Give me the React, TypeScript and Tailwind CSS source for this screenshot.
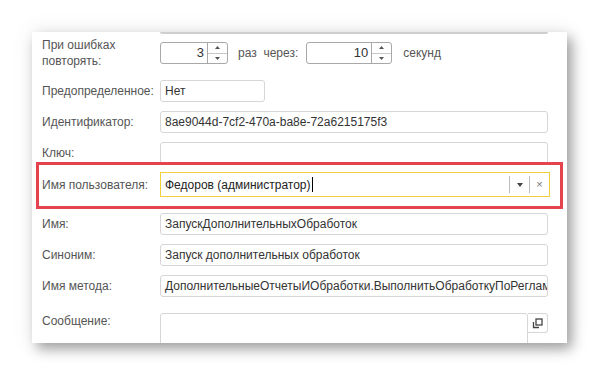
import type { ReactNode } from "react";

const LABEL_W = "w-[118px] shrink-0";

function Label({ children }: { children: ReactNode }) {
  return <div className={`${LABEL_W} text-[#555] leading-4`}>{children}</div>;
}

function Field({ value, w = "w-[388px]" }: { value?: string; w?: string }) {
  return (
    <div
      className={`${w} h-[22px] border border-[#d6d6d6] rounded-[3px] bg-white px-[4px] flex items-center overflow-hidden whitespace-nowrap text-[#333]`}
    >
      {value}
    </div>
  );
}

function Spinner({ value, w }: { value: string; w: string }) {
  return (
    <div className={`${w} h-[22px] border border-[#a8a8a8] rounded-[3px] bg-white flex`}>
      <div className="flex-1 flex items-center justify-end pr-[3px] text-[#333] text-[13px]">{value}</div>
      <div className="w-[20px] border-l border-[#a8a8a8] flex flex-col">
        <div className="flex-1 flex items-center justify-center border-b border-[#c8c8c8]">
          <svg width="5" height="3" viewBox="0 0 5 3">
            <path d="M0 3 L2.5 0 L5 3 Z" fill="#555" />
          </svg>
        </div>
        <div className="flex-1 flex items-center justify-center">
          <svg width="5" height="3" viewBox="0 0 5 3">
            <path d="M0 0 L2.5 3 L5 0 Z" fill="#555" />
          </svg>
        </div>
      </div>
    </div>
  );
}

export default function App() {
  return (
    <div
      className="w-[600px] h-[375px] bg-white pt-[32px] pl-[32px] text-[12px]"
      style={{ fontFamily: '"Liberation Sans", Arial, sans-serif' }}
    >
      <div className="relative w-[535px] h-[311px] bg-white overflow-hidden shadow-[5px_6px_12px_rgba(0,0,0,0.35),0_0_22px_rgba(0,0,0,0.08)] pl-[10px]">
        {/* bottom edge of a field scrolled out of view */}
        <div className="ml-[118px] w-[388px] h-[2px] bg-[#cfcfcf] rounded-b-[2px]" />

        <div className="mt-[8px] h-[22px] flex items-center">
          <Label>
            При ошибках
            <br />
            повторять:
          </Label>
          <Spinner value="3" w="w-[68px]" />
          <span className="ml-[10px] text-[#555] whitespace-pre">раз  через:</span>
          <div className="ml-[8px]">
            <Spinner value="10" w="w-[86px]" />
          </div>
          <span className="ml-[11px] text-[#555]">секунд</span>
        </div>

        <div className="mt-[16px] flex items-center">
          <Label>Предопределенное:</Label>
          <Field value="Нет" w="w-[105px]" />
        </div>

        <div className="mt-[9px] flex items-center">
          <Label>Идентификатор:</Label>
          <Field value="8ae9044d-7cf2-470a-ba8e-72a6215175f3" />
        </div>

        <div className="mt-[9px] flex items-center">
          <Label>Ключ:</Label>
          <Field />
        </div>

        <div className="mt-[8px] flex items-center">
          <Label>Имя пользователя:</Label>
          <div className="w-[390px] h-[25px] border-[1.5px] border-[#f2cf3c] bg-white flex items-center text-[#222]">
            <div className="flex-1 pl-[4px] flex items-center">
              Федоров (администратор)
              <span className="inline-block w-[1px] h-[15px] bg-black ml-[1px]" />
            </div>
            <div className="w-[20px] h-[17px] border-l border-[#bdbdbd] flex items-center justify-center">
              <svg width="6" height="4" viewBox="0 0 6 4">
                <path d="M0 0 L3 4 L6 0 Z" fill="#444" />
              </svg>
            </div>
            <div className="w-[20px] h-[17px] border-l border-[#bdbdbd] flex items-center justify-center text-[11px] text-[#777]">
              ×
            </div>
          </div>
        </div>

        {/* highlight frame */}
        <div className="absolute left-[4px] top-[130px] w-[527px] h-[47px] border-[3px] border-[#e5444f]" />

        <div className="mt-[16px] flex items-center">
          <Label>Имя:</Label>
          <Field value="ЗапускДополнительныхОбработок" />
        </div>

        <div className="mt-[9px] flex items-center">
          <Label>Синоним:</Label>
          <Field value="Запуск дополнительных обработок" />
        </div>

        <div className="mt-[9px] flex items-center">
          <Label>Имя метода:</Label>
          <Field value="ДополнительныеОтчетыИОбработки.ВыполнитьОбработкуПоРегламенту" />
        </div>

        <div className="mt-[16px] flex items-start">
          <div className={`${LABEL_W} text-[#555] leading-4`}>Сообщение:</div>
          <div className="w-[368px] h-[60px] border border-[#d6d6d6] rounded-t-[3px] bg-white" />
          <div className="w-[20px] h-[20px] border border-l-0 border-[#d6d6d6] rounded-r-[3px] flex items-center justify-center">
            <svg width="11" height="11" viewBox="0 0 11 11" fill="none" stroke="#444" strokeWidth="1.3">
              <rect x="4" y="1" width="6" height="6" />
              <path d="M1.5 4 V9.5 H7" />
            </svg>
          </div>
        </div>
      </div>
    </div>
  );
}
